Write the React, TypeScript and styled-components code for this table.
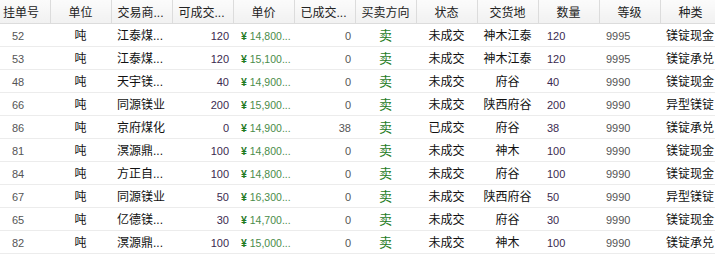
import React from 'react';
import styled, {createGlobalStyle} from 'styled-components';

type Align = 'left' | 'center' | 'right'

type Order = {
    id: string
    trader: string
    available: string
    price: string
    done: string
    status: string
    place: string
    qty: string
    grade: string
    kind: string
}

const orders: Order[] = [
    {id: '52', trader: '江泰煤...', available: '120', price: '14,800...', done: '0', status: '未成交', place: '神木江泰', qty: '120', grade: '9995', kind: '镁锭现金'},
    {id: '53', trader: '江泰煤...', available: '120', price: '15,100...', done: '0', status: '未成交', place: '神木江泰', qty: '120', grade: '9995', kind: '镁锭承兑'},
    {id: '48', trader: '天宇镁...', available: '40', price: '14,900...', done: '0', status: '未成交', place: '府谷', qty: '40', grade: '9990', kind: '镁锭现金'},
    {id: '66', trader: '同源镁业', available: '200', price: '15,900...', done: '0', status: '未成交', place: '陕西府谷', qty: '200', grade: '9990', kind: '异型镁锭'},
    {id: '86', trader: '京府煤化', available: '0', price: '14,900...', done: '38', status: '已成交', place: '府谷', qty: '38', grade: '9990', kind: '镁锭承兑'},
    {id: '81', trader: '溟源鼎...', available: '100', price: '14,800...', done: '0', status: '未成交', place: '神木', qty: '100', grade: '9990', kind: '镁锭现金'},
    {id: '84', trader: '方正自...', available: '100', price: '14,800...', done: '0', status: '未成交', place: '府谷', qty: '100', grade: '9990', kind: '镁锭现金'},
    {id: '67', trader: '同源镁业', available: '50', price: '16,300...', done: '0', status: '未成交', place: '陕西府谷', qty: '50', grade: '9990', kind: '异型镁锭'},
    {id: '65', trader: '亿德镁...', available: '30', price: '14,700...', done: '0', status: '未成交', place: '府谷', qty: '30', grade: '9990', kind: '镁锭现金'},
    {id: '82', trader: '溟源鼎...', available: '100', price: '15,000...', done: '0', status: '未成交', place: '神木', qty: '100', grade: '9990', kind: '镁锭承兑'},
]

const headers: {title: string, align: Align, pad: number}[] = [
    {title: '挂单号', align: 'left', pad: 3},
    {title: '单位', align: 'center', pad: 0},
    {title: '交易商...', align: 'left', pad: 6},
    {title: '可成交...', align: 'left', pad: 6},
    {title: '单价', align: 'center', pad: 0},
    {title: '已成交...', align: 'left', pad: 6},
    {title: '买卖方向', align: 'center', pad: 0},
    {title: '状态', align: 'center', pad: 0},
    {title: '交货地', align: 'center', pad: 0},
    {title: '数量', align: 'center', pad: 0},
    {title: '等级', align: 'center', pad: 0},
    {title: '种类', align: 'center', pad: 0},
]

export default function App() {
    return (
        <>
            <GlobalStyle/>
            <Grid>
                <colgroup>
                    <col style={{width: 50}}/>
                    {headers.slice(1).map((h) => <col key={h.title} style={{width: 61}}/>)}
                </colgroup>
                <thead>
                <tr>
                    {headers.map((h) => (
                        <HeadCell key={h.title} align={h.align} $pad={h.pad}>{h.title}</HeadCell>
                    ))}
                </tr>
                </thead>
                <tbody>
                {orders.map((o) => (
                    <Row key={o.id}>
                        <Cell align="left" $pad={12}><Num>{o.id}</Num></Cell>
                        <Cell align="center">吨</Cell>
                        <Cell align="left" $pad={6}>{o.trader}</Cell>
                        <Cell align="right" $pad={4}><Amount>{o.available}</Amount></Cell>
                        <Cell align="left" $pad={8}><Price><Yen>¥</Yen> {o.price}</Price></Cell>
                        <Cell align="right" $pad={4}><Num>{o.done}</Num></Cell>
                        <Cell align="center"><Side>卖</Side></Cell>
                        <Cell align="center">{o.status}</Cell>
                        <Cell align="center">{o.place}</Cell>
                        <Cell align="left" $pad={9}><Amount>{o.qty}</Amount></Cell>
                        <Cell align="left" $pad={7}><Num>{o.grade}</Num></Cell>
                        <Cell align="left" $pad={6}>{o.kind}</Cell>
                    </Row>
                ))}
                </tbody>
            </Grid>
        </>
    );
}

const GlobalStyle = createGlobalStyle`
  body {
    margin: 0;
    background: #fff;
    overflow: hidden;
    font-family: "Liberation Sans", "Noto Sans CJK SC", sans-serif;
    font-size: 12px;
    color: #111;
  }
`
const Grid = styled.table`
  width: 721px;
  table-layout: fixed;
  border-collapse: collapse;
`
const HeadCell = styled.th<{ align: Align, $pad: number }>`
  height: 23px;
  padding: 0 ${props => props.$pad}px;
  text-align: ${props => props.align};
  font-weight: normal;
  color: #222;
  background: linear-gradient(#fbfbfb, #f1f1f1);
  border-bottom: 1px solid #dcdcdc;
  border-right: 1px solid #dcdcdc;
  white-space: nowrap;
  overflow: hidden;
`
const Row = styled.tr`
  border-bottom: 1px solid #ececec;
`
const Cell = styled.td<{ align: Align, $pad?: number }>`
  height: 21px;
  padding: 1px ${props => props.$pad ?? 0}px 0;
  text-align: ${props => props.align};
  white-space: nowrap;
  overflow: hidden;
  line-height: 20px;
`
const Num = styled.span`
  color: #555;
  font-size: 11px;
`
const Amount = styled.span`
  color: #3b2a4f;
  font-size: 11px;
`
const Price = styled.span`
  color: #4a8c4a;
  font-size: 10.5px;
`
const Yen = styled.b`
  color: #1f7a1f;
`
const Side = styled.span`
  color: #1e7b1e;
  font-size: 13px;
`
